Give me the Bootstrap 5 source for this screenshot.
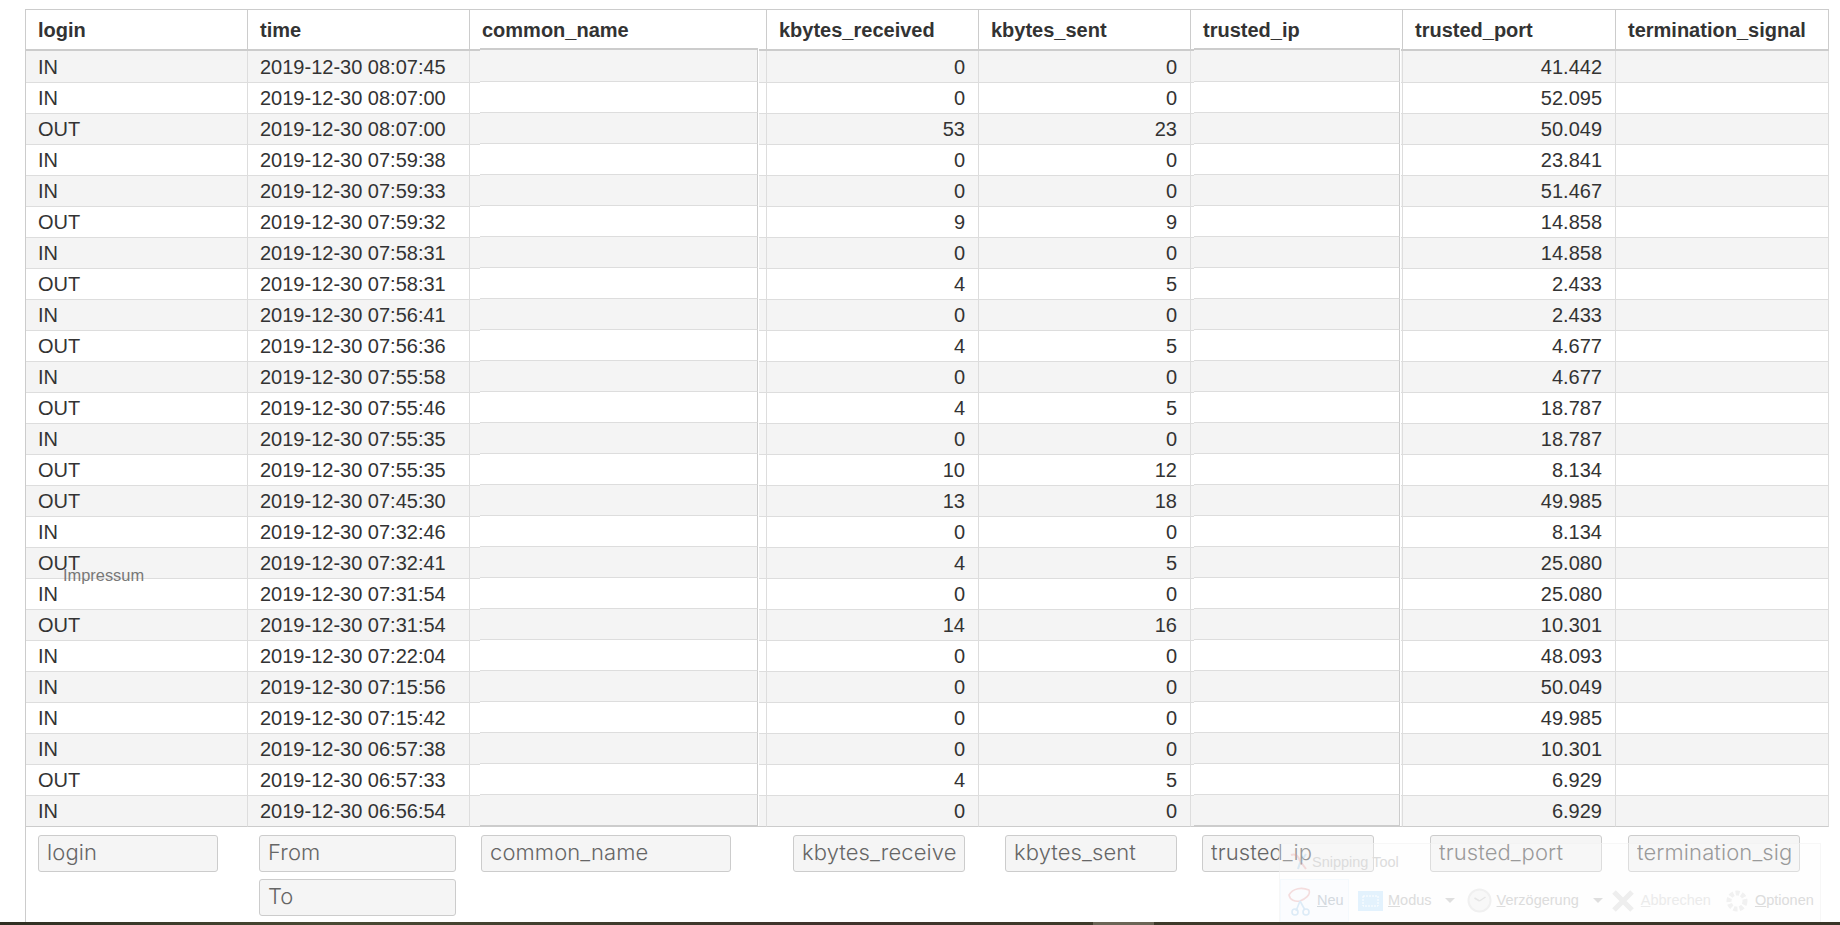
<!DOCTYPE html>
<html lang="de">
<head>
<meta charset="utf-8">
<title>Log</title>
<link href="https://cdn.jsdelivr.net/npm/bootstrap@5.3.0/dist/css/bootstrap.min.css" rel="stylesheet">
<style>
html,body{height:925px;overflow:hidden;background:#fff}
body{display:flex;flex-direction:column;font-family:"Liberation Sans",Arial,sans-serif;font-size:20px;color:#333;position:relative}
.page-frame{flex:1 1 auto;margin-top:9px;margin-left:25px;border-left:1px solid #ccc;min-height:0}
.desk-strip{flex:0 0 3px;background:linear-gradient(90deg,#2f2e22 0,#4a4a34 18%,#3e3a2c 35%,#40322c 45%,#3e3a2a 58%,#3a3528 100%);position:relative}
.desk-chunk{position:absolute;left:1093px;width:61px;top:0;bottom:0;background:#6b6556}
.log-table{table-layout:fixed;width:1803px;border-collapse:separate;border-spacing:0;margin:0;color:#333;--bs-table-color:#333;--bs-table-bg:transparent}
.log-table>thead>tr>th{height:42px;padding:0 12px;font-size:20px;font-weight:700;line-height:1;vertical-align:middle;white-space:nowrap;background:#fff;color:#333;border-top:1px solid #ccc;border-bottom:2px solid #ccc;border-left:1px solid #ccc;border-right:0;box-shadow:none}
.log-table>thead>tr>th:first-child,.log-table>tbody>tr>td:first-child{border-left:0}
.log-table>thead>tr>th:last-child{border-right:1px solid #ccc}
.log-table>tbody>tr>td{height:31px;padding:0 12px;font-size:20px;line-height:1;vertical-align:middle;white-space:nowrap;color:#333;border-top:1px solid #ddd;border-left:1px solid #ddd;border-bottom:0;border-right:0;box-shadow:none;background:#fff}
.log-table>tbody>tr>td.text-end{padding-right:13px}
.log-table>tbody>tr>td:last-child{border-right:1px solid #ddd}
.log-table>tbody>tr:first-child>td{border-top:0}
.log-table>tbody>tr:nth-child(odd)>td{background:#f4f4f4}
.log-table>tbody>tr:last-child>td{height:32px;border-bottom:1px solid #ccc}
.col-login{width:221px}.col-time{width:222px}.col-cn{width:297px}.col-rx{width:212px}.col-tx{width:212px}.col-ip{width:212px}.col-port{width:213px}.col-sig{width:214px}
.log-table>tbody>tr>td.offset-cn,.log-table>tbody>tr>td.offset-ip{position:relative}
.offset-cn::before,.offset-ip::before{content:"";position:absolute;top:-2px;height:31px;background:#fff;border-top:1px solid #ddd;border-right:1px solid #ccc;box-shadow:1px 0 0 #fff}
.offset-cn::before{left:10px;right:8px}
.offset-ip::before{left:3px;right:2px}
.log-table>tbody>tr:nth-child(odd)>td.offset-cn::before,.log-table>tbody>tr:nth-child(odd)>td.offset-ip::before{background:#f4f4f4}
.log-table>tbody>tr:first-child>td.offset-cn::before,.log-table>tbody>tr:first-child>td.offset-ip::before{top:-3px;height:34px;border-top:2px solid #ccc}
.log-table>tbody>tr:last-child>td.offset-cn::before,.log-table>tbody>tr:last-child>td.offset-ip::before{height:32px;border-bottom:1px solid #ccc}
.filter-row{margin-top:8px}
.filter-stack{display:flex;flex-direction:column;gap:7px}
.filter-input.form-control{height:37px;min-height:0;padding:0 8px 3px;font-family:"Inter","Noto Sans",sans-serif;font-weight:300;font-size:22px;letter-spacing:.1px;line-height:1;background:#f5f5f5;border:1px solid #ccc;border-radius:3px;box-shadow:none}
.filter-input.form-control::placeholder{color:#666;opacity:1}
.f-login{width:180px;margin-left:12px}
.f-time{width:197px;margin-left:41px}
.f-cn{width:250px;margin-left:25px}
.f-rx{width:172px;margin-left:62px}
.f-tx{width:172px;margin-left:40px}
.f-ip{width:172px;margin-left:25px}
.f-port{width:172px;margin-left:56px}
.f-sig{width:172px;margin-left:26px}
.imprint{position:absolute;left:63px;top:566px;font-size:16.4px;line-height:1.1;color:#777}
.ghost-win{position:absolute;left:1279px;top:843px;width:542px;height:79px;background:rgba(252,252,252,.35);border:1px solid rgba(240,240,240,.5);border-bottom:0;color:#dcdcdc;font-family:"Liberation Sans",Arial,sans-serif;font-size:14.5px;line-height:1;pointer-events:none}
.ghost-title{height:35px;padding:11px 0 0 32px;position:relative}
.ghost-title svg{position:absolute;left:8px;top:8px}
.ghost-bar{height:43px}
.ghost-bar u{text-decoration-thickness:1px}
.ghost-new{width:69px;height:43px;padding-left:5px;gap:3px;background:rgba(244,250,255,.3);border:1px solid rgba(235,244,252,.4);color:#d3d9de}
.ghost-caret{width:0;height:0;border-left:5px solid transparent;border-right:5px solid transparent;border-top:5px solid #dfdfdf}
.g-mode{margin-left:9px;gap:5px}
.g-delay{margin-left:0;gap:5px}
.g-stop{margin-left:0;gap:6px}
.g-opts{margin-left:14px;gap:6px}
.caret-a{margin:0 12px 0 13px}
.caret-b{margin:0 8px 0 14px}
.ghost-fade{opacity:.55}
</style>
</head>
<body>
<div class="page-frame">
<table class="table log-table">
<colgroup><col class="col-login"><col class="col-time"><col class="col-cn"><col class="col-rx"><col class="col-tx"><col class="col-ip"><col class="col-port"><col class="col-sig"></colgroup>
<thead><tr><th>login</th><th>time</th><th>common_name</th><th>kbytes_received</th><th>kbytes_sent</th><th>trusted_ip</th><th>trusted_port</th><th>termination_signal</th></tr></thead>
<tbody>
<tr><td>IN</td><td>2019-12-30 08:07:45</td><td class="offset-cn"></td><td class="text-end">0</td><td class="text-end">0</td><td class="offset-ip"></td><td class="text-end">41.442</td><td></td></tr>
<tr><td>IN</td><td>2019-12-30 08:07:00</td><td class="offset-cn"></td><td class="text-end">0</td><td class="text-end">0</td><td class="offset-ip"></td><td class="text-end">52.095</td><td></td></tr>
<tr><td>OUT</td><td>2019-12-30 08:07:00</td><td class="offset-cn"></td><td class="text-end">53</td><td class="text-end">23</td><td class="offset-ip"></td><td class="text-end">50.049</td><td></td></tr>
<tr><td>IN</td><td>2019-12-30 07:59:38</td><td class="offset-cn"></td><td class="text-end">0</td><td class="text-end">0</td><td class="offset-ip"></td><td class="text-end">23.841</td><td></td></tr>
<tr><td>IN</td><td>2019-12-30 07:59:33</td><td class="offset-cn"></td><td class="text-end">0</td><td class="text-end">0</td><td class="offset-ip"></td><td class="text-end">51.467</td><td></td></tr>
<tr><td>OUT</td><td>2019-12-30 07:59:32</td><td class="offset-cn"></td><td class="text-end">9</td><td class="text-end">9</td><td class="offset-ip"></td><td class="text-end">14.858</td><td></td></tr>
<tr><td>IN</td><td>2019-12-30 07:58:31</td><td class="offset-cn"></td><td class="text-end">0</td><td class="text-end">0</td><td class="offset-ip"></td><td class="text-end">14.858</td><td></td></tr>
<tr><td>OUT</td><td>2019-12-30 07:58:31</td><td class="offset-cn"></td><td class="text-end">4</td><td class="text-end">5</td><td class="offset-ip"></td><td class="text-end">2.433</td><td></td></tr>
<tr><td>IN</td><td>2019-12-30 07:56:41</td><td class="offset-cn"></td><td class="text-end">0</td><td class="text-end">0</td><td class="offset-ip"></td><td class="text-end">2.433</td><td></td></tr>
<tr><td>OUT</td><td>2019-12-30 07:56:36</td><td class="offset-cn"></td><td class="text-end">4</td><td class="text-end">5</td><td class="offset-ip"></td><td class="text-end">4.677</td><td></td></tr>
<tr><td>IN</td><td>2019-12-30 07:55:58</td><td class="offset-cn"></td><td class="text-end">0</td><td class="text-end">0</td><td class="offset-ip"></td><td class="text-end">4.677</td><td></td></tr>
<tr><td>OUT</td><td>2019-12-30 07:55:46</td><td class="offset-cn"></td><td class="text-end">4</td><td class="text-end">5</td><td class="offset-ip"></td><td class="text-end">18.787</td><td></td></tr>
<tr><td>IN</td><td>2019-12-30 07:55:35</td><td class="offset-cn"></td><td class="text-end">0</td><td class="text-end">0</td><td class="offset-ip"></td><td class="text-end">18.787</td><td></td></tr>
<tr><td>OUT</td><td>2019-12-30 07:55:35</td><td class="offset-cn"></td><td class="text-end">10</td><td class="text-end">12</td><td class="offset-ip"></td><td class="text-end">8.134</td><td></td></tr>
<tr><td>OUT</td><td>2019-12-30 07:45:30</td><td class="offset-cn"></td><td class="text-end">13</td><td class="text-end">18</td><td class="offset-ip"></td><td class="text-end">49.985</td><td></td></tr>
<tr><td>IN</td><td>2019-12-30 07:32:46</td><td class="offset-cn"></td><td class="text-end">0</td><td class="text-end">0</td><td class="offset-ip"></td><td class="text-end">8.134</td><td></td></tr>
<tr><td>OUT</td><td>2019-12-30 07:32:41</td><td class="offset-cn"></td><td class="text-end">4</td><td class="text-end">5</td><td class="offset-ip"></td><td class="text-end">25.080</td><td></td></tr>
<tr><td>IN</td><td>2019-12-30 07:31:54</td><td class="offset-cn"></td><td class="text-end">0</td><td class="text-end">0</td><td class="offset-ip"></td><td class="text-end">25.080</td><td></td></tr>
<tr><td>OUT</td><td>2019-12-30 07:31:54</td><td class="offset-cn"></td><td class="text-end">14</td><td class="text-end">16</td><td class="offset-ip"></td><td class="text-end">10.301</td><td></td></tr>
<tr><td>IN</td><td>2019-12-30 07:22:04</td><td class="offset-cn"></td><td class="text-end">0</td><td class="text-end">0</td><td class="offset-ip"></td><td class="text-end">48.093</td><td></td></tr>
<tr><td>IN</td><td>2019-12-30 07:15:56</td><td class="offset-cn"></td><td class="text-end">0</td><td class="text-end">0</td><td class="offset-ip"></td><td class="text-end">50.049</td><td></td></tr>
<tr><td>IN</td><td>2019-12-30 07:15:42</td><td class="offset-cn"></td><td class="text-end">0</td><td class="text-end">0</td><td class="offset-ip"></td><td class="text-end">49.985</td><td></td></tr>
<tr><td>IN</td><td>2019-12-30 06:57:38</td><td class="offset-cn"></td><td class="text-end">0</td><td class="text-end">0</td><td class="offset-ip"></td><td class="text-end">10.301</td><td></td></tr>
<tr><td>OUT</td><td>2019-12-30 06:57:33</td><td class="offset-cn"></td><td class="text-end">4</td><td class="text-end">5</td><td class="offset-ip"></td><td class="text-end">6.929</td><td></td></tr>
<tr><td>IN</td><td>2019-12-30 06:56:54</td><td class="offset-cn"></td><td class="text-end">0</td><td class="text-end">0</td><td class="offset-ip"></td><td class="text-end">6.929</td><td></td></tr>
</tbody>
</table>
<div class="filter-row d-flex align-items-start">
<div class="f-login"><input class="form-control filter-input" placeholder="login"></div>
<div class="f-time filter-stack"><input class="form-control filter-input" placeholder="From"><input class="form-control filter-input" placeholder="To"></div>
<div class="f-cn"><input class="form-control filter-input" placeholder="common_name"></div>
<div class="f-rx"><input class="form-control filter-input" placeholder="kbytes_received"></div>
<div class="f-tx"><input class="form-control filter-input" placeholder="kbytes_sent"></div>
<div class="f-ip"><input class="form-control filter-input" placeholder="trusted_ip"></div>
<div class="f-port"><input class="form-control filter-input" placeholder="trusted_port"></div>
<div class="f-sig"><input class="form-control filter-input" placeholder="termination_signal"></div>
</div>
</div>
<div class="desk-strip"><div class="desk-chunk"></div></div>
<div class="imprint">Impressum</div>
<div class="ghost-win">
<div class="ghost-title"><svg width="22" height="20" viewBox="0 0 22 20" fill="none" opacity=".3"><path d="M3 3c5-2 8 2 9 6l6 8" stroke="#e89a9a" stroke-width="2"/><path d="M18 2l-6 9-2 6" stroke="#9ac6e8" stroke-width="2"/></svg>Snipping Tool</div>
<div class="ghost-bar d-flex align-items-center">
<div class="ghost-new d-flex align-items-center"><svg width="28" height="30" viewBox="0 0 28 30" fill="none" class="flex-shrink-0" opacity=".6"><path d="M3 9c4-7 13-8 20-5 2 5-4 9-9 11C9 16 4 14 3 9z" stroke="#f1c9c9" stroke-width="1.6"/><path d="M14 15l5 9M14 15l-4 10" stroke="#c9e1f3" stroke-width="1.6"/><circle cx="20" cy="26" r="3" stroke="#c9e1f3" stroke-width="1.6"/><circle cx="9" cy="26" r="3" stroke="#c9e1f3" stroke-width="1.6"/></svg><span><u>N</u>eu</span></div>
<div class="d-flex align-items-center g-mode"><svg width="25" height="20" viewBox="0 0 25 20"><rect width="25" height="20" fill="#e3f2fd"/><rect x="5" y="5" width="15" height="10" fill="none" stroke="#fff" stroke-dasharray="2 1"/></svg><span><u>M</u>odus</span></div>
<span class="ghost-caret caret-a"></span>
<div class="d-flex align-items-center g-delay"><svg width="25" height="25" viewBox="0 0 25 25" fill="none"><circle cx="12.5" cy="12.5" r="11" fill="#f8f8f8" stroke="#f0f0f0" stroke-width="2"/><path d="M12.5 13l-5-3M12.5 13l6-4" stroke="#e6e6e6" stroke-width="1.5"/></svg><span><u>V</u>erzögerung</span></div>
<span class="ghost-caret caret-b"></span>
<div class="d-flex align-items-center g-stop"><svg width="24" height="24" viewBox="0 0 24 24" fill="none"><path d="M3 3l18 18M21 3L3 21" stroke="#eeeeee" stroke-width="5"/></svg><span class="ghost-fade"><u>A</u>bbrechen</span></div>
<div class="d-flex align-items-center g-opts"><svg width="24" height="26" viewBox="0 0 24 26" fill="none"><circle cx="12" cy="13" r="8" stroke="#f1f1f1" stroke-width="5" stroke-dasharray="4 2"/></svg><span><u>O</u>ptionen</span></div>
</div>
</div>
<script src="https://cdn.jsdelivr.net/npm/bootstrap@5.3.0/dist/js/bootstrap.bundle.min.js"></script>
</body>
</html>
